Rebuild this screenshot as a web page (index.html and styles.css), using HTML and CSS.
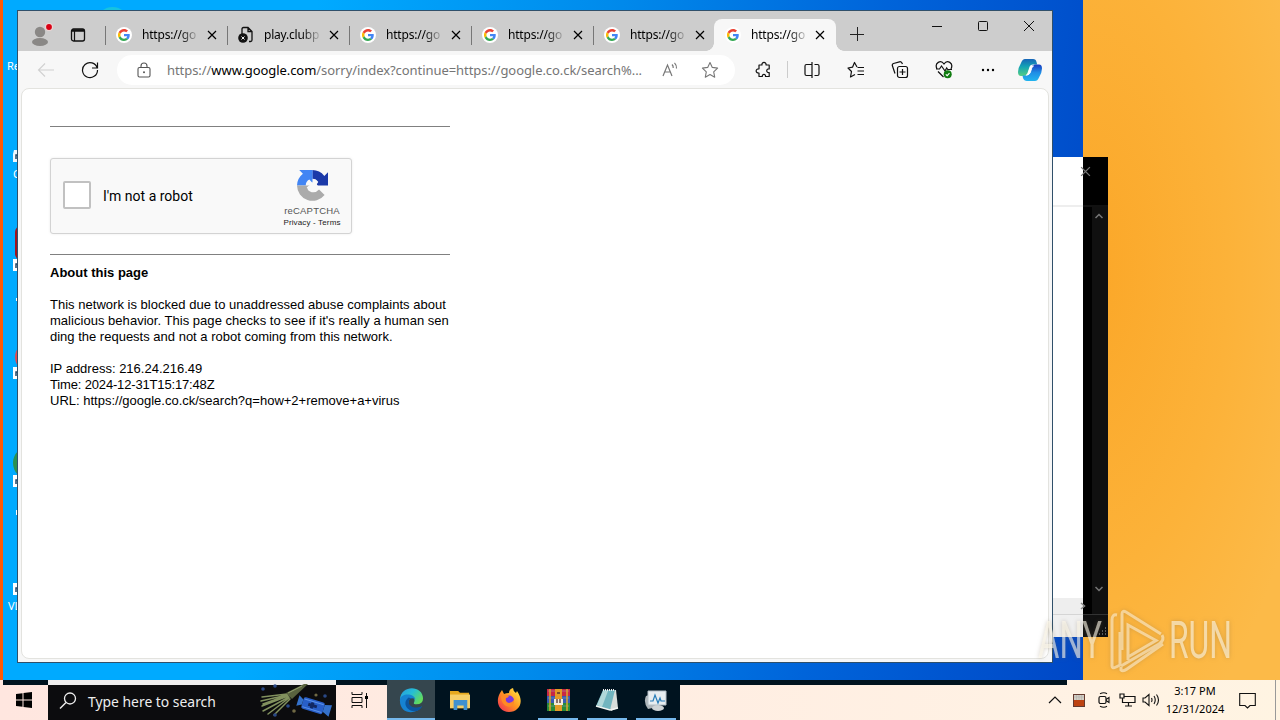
FILE: index.html
```html
<!DOCTYPE html>
<html lang="en">
<head>
    <meta charset="UTF-8">
    <meta name="viewport" content="width=device-width, initial-scale=1.0">
    <title>Desktop</title>
    <link rel="stylesheet" href="styles.css">
</head>
<body>
    <svg class="sprite" width="0" height="0">
        <symbol id="google" viewBox="0 0 48 48">
            <path fill="#ea4335" d="M24 9.500c3.500 0 6.700 1.200 9.200 3.600l6.900-6.900C35.900 2.400 30.500 0 24 0 14.600 0 6.500 5.400 2.600 13.200l8 6.200C12.400 13.700 17.700 9.500 24 9.500z"/>
            <path fill="#4285f4" d="M47 24.500c0-1.600-.2-3.100-.4-4.500H24v9h12.900c-.6 3-2.300 5.500-4.800 7.200l7.700 6C44.400 38 47 31.800 47 24.500z"/>
            <path fill="#fbbc05" d="M10.500 28.600a14.500 14.500 0 0 1 0-9.200l-8-6.200a24 24 0 0 0 0 21.600z"/>
            <path fill="#34a853" d="M24 48c6.500 0 11.900-2.100 15.900-5.800l-7.700-6c-2.200 1.500-4.900 2.300-8.200 2.300-6.300 0-11.600-4.200-13.500-9.900l-8 6.200C6.500 42.600 14.600 48 24 48z"/>
        </symbol>
        <symbol id="close" viewBox="0 0 10 10">
            <path d="M1 1l8 8M9 1L1 9" fill="none" stroke="currentColor" stroke-width="1.200"/>
        </symbol>
        <symbol id="shortcut" viewBox="0 0 12 12">
            <path fill="#fff" d="M0 0h12v12H0z"/>
            <path d="M3 9V5h5M6 3l2 2-2 2" fill="none" stroke="#246" stroke-width="1.500"/>
        </symbol>
    </svg>

    <div class="desktop">
        <div class="wallpaper"></div>

        <!-- desktop shortcuts, mostly hidden behind the browser -->
        <div class="shortcut s-recycle">Recycle Bin</div>
        <div class="shortcut s-one"><svg width="12" height="16" viewBox="0 0 12 16"><path d="M1 4h3V0h4v16H0V8z" fill="#eef6fb"/><path d="M3 13V9h5M6 7l2 2-2 2" fill="none" stroke="#246" stroke-width="1.500"/></svg></div>
        <div class="shortcut s-one-label">Opera</div>
        <div class="shortcut s-acrobat"></div>
        <div class="shortcut s-two"><svg width="12" height="12"><use href="#shortcut"/></svg></div>
        <div class="shortcut s-red"></div>
        <div class="shortcut s-three"><svg width="12" height="12"><use href="#shortcut"/></svg></div>
        <div class="shortcut s-green"></div>
        <div class="shortcut s-four"><svg width="12" height="12"><use href="#shortcut"/></svg></div>
        <div class="shortcut s-five"><svg width="12" height="12"><use href="#shortcut"/></svg></div>
        <div class="shortcut s-vlc">VLC media</div>
        <div class="shortcut s-top"></div>
        <div class="shortcut s-mark m-one"></div>
        <div class="shortcut s-mark m-two"></div>

        <!-- window behind, its right side has inverted colours -->
        <div class="back-window">
            <div class="back-light">
                <div class="back-head"></div>
                <div class="back-body"></div>
                <div class="back-scroll"></div>
                <div class="back-foot"></div>
            </div>
            <div class="back-dark">
                <div class="back-head"></div>
                <div class="back-track">
                    <svg width="8" height="6" viewBox="0 0 8 6"><path d="M.5 5L4 1.500 7.500 5" fill="none" stroke="#777" stroke-width="1.500"/></svg>
                    <svg width="8" height="6" viewBox="0 0 8 6"><path d="M.5 1L4 4.500 7.500 1" fill="none" stroke="#777" stroke-width="1.500"/></svg>
                </div>
                <div class="back-foot"><svg width="8" height="8"><path d="M1 7h1M4 7h1M7 7h1M4 4h1M7 4h1M7 1h1" stroke="#777" stroke-width="1.500"/></svg></div>
            </div>
            <svg class="back-close" width="11" height="11"><use href="#close"/></svg>
            <svg class="back-arrow" width="6" height="8" viewBox="0 0 6 8"><path d="M1 1l3.500 3L1 7" fill="none" stroke="#888" stroke-width="1.500"/></svg>
        </div>

        <div class="browser">
            <div class="titlebar">
                <div class="tab-actions">
                    <svg width="24" height="24" viewBox="0 0 24 24">
                        <circle cx="11" cy="9" r="5.200" fill="#8a8886"/><ellipse cx="11" cy="19" rx="8" ry="4" fill="#8a8886"/>
                        <circle cx="20" cy="4" r="4" fill="#ecd5d5"/><circle cx="20" cy="4" r="2.900" fill="#d90014"/>
                    </svg>
                    <svg width="16" height="16" viewBox="0 0 16 16"><rect x="1.500" y="2" width="13" height="12" rx="2" fill="none" stroke="#111" stroke-width="1.300"/><path d="M2 3.500h12" stroke="#111" stroke-width="2.500"/><path d="M4.500 4v10" stroke="#111" stroke-width="1.200"/></svg>
                </div>
                <div class="tab"><span class="favicon"><svg width="12" height="12"><use href="#google"/></svg></span><span class="tab-title">https://go</span><svg class="tab-close" width="10" height="10"><use href="#close"/></svg></div>
                <div class="tab"><span class="favicon plain"><svg width="16" height="18" viewBox="0 0 16 18"><path d="M4 8V3q0-1.500 1.500-1.500H10l4 4V14q0 1.500-1.500 1.500H11M10 1.500v4h4" fill="none" stroke="#111" stroke-width="1.300"/><circle cx="5" cy="12" r="4.800" fill="#111"/><path d="M3.500 10.500l3 3m0-3l-3 3" stroke="#eee" stroke-width="1"/></svg></span><span class="tab-title">play.clubp</span><svg class="tab-close" width="10" height="10"><use href="#close"/></svg></div>
                <div class="tab"><span class="favicon"><svg width="12" height="12"><use href="#google"/></svg></span><span class="tab-title">https://go</span><svg class="tab-close" width="10" height="10"><use href="#close"/></svg></div>
                <div class="tab"><span class="favicon"><svg width="12" height="12"><use href="#google"/></svg></span><span class="tab-title">https://go</span><svg class="tab-close" width="10" height="10"><use href="#close"/></svg></div>
                <div class="tab"><span class="favicon"><svg width="12" height="12"><use href="#google"/></svg></span><span class="tab-title">https://go</span><svg class="tab-close" width="10" height="10"><use href="#close"/></svg></div>
                <div class="tab active"><span class="favicon"><svg width="12" height="12"><use href="#google"/></svg></span><span class="tab-title">https://go</span><svg class="tab-close" width="10" height="10"><use href="#close"/></svg></div>
                <svg class="new-tab" width="14" height="14" viewBox="0 0 14 14"><path d="M7.500 0v14M0 7.500h14" stroke="#222"/></svg>
                <div class="window-controls">
                    <span><svg width="10" height="10"><path d="M0 5.500h10" stroke="#111"/></svg></span>
                    <span><svg width="10" height="10"><rect x=".5" y=".5" width="9" height="9" rx="1" fill="none" stroke="#111"/></svg></span>
                    <span><svg width="12" height="12" viewBox="0 0 12 12"><path d="M1 1l10 10M11 1L1 11" stroke="#111"/></svg></span>
                </div>
            </div>

            <div class="toolbar">
                <span class="tool"><svg width="18" height="16" viewBox="0 0 18 16"><path d="M17 8H1M8 1.500L1.500 8 8 14.500" fill="none" stroke="#d0d0d0" stroke-width="1.100"/></svg></span>
                <span class="tool"><svg width="18" height="18" viewBox="0 0 18 18"><path d="M16.200 7A7.500 7.500 0 1 0 16.500 9M16.500 1.500V7H11" fill="none" stroke="#111" stroke-width="1.200"/></svg></span>
                <div class="address">
                    <svg class="lock" width="14" height="16" viewBox="0 0 14 16"><rect x="1" y="5.500" width="12" height="9.500" rx="1.500" fill="none" stroke="#555" stroke-width="1.100"/><path d="M4 5.500V4a3 3 0 0 1 6 0v1.500" fill="none" stroke="#555" stroke-width="1.100"/><circle cx="7" cy="10.300" r="1" fill="#555"/></svg>
                    <span class="url">https://<b>www.google.com</b>/sorry/index?continue=https://google.co.ck/search%...</span>
                    <svg class="read" width="18" height="18" viewBox="0 0 18 18"><path d="M2 15L6.500 4 11 15M3.500 11h6M11 3.500q1.500 1.500 1.200 3.500M13.500 1.800q2.400 2.500 2 5.700" fill="none" stroke="#777" stroke-width="1.200"/></svg>
                    <svg width="18" height="18" viewBox="0 0 18 18"><path d="M9 1.500l2.300 4.900 5.300.7-3.900 3.700 1 5.400L9 13.600l-4.700 2.600 1-5.400L1.400 7.100l5.300-.7z" fill="none" stroke="#777" stroke-width="1.100" stroke-linejoin="round"/></svg>
                </div>
                <span class="tool"><svg width="17" height="18" viewBox="0 0 17 18"><path d="M4 4h3c-.7-3.500 4.700-3.500 4 0h3.200v4c-3.300-.6-3.300 4 0 3.600V15.500H10.500c.4-2.800-3.500-2.800-3.200 0H4V12C.2 12.300.2 7.500 4 7.800z" fill="none" stroke="#111" stroke-width="1.200" stroke-linejoin="round"/></svg></span>
                <span class="tool-divider"></span>
                <span class="tool"><svg width="16" height="16" viewBox="0 0 16 16"><path d="M5.500 2.500H2.500Q1 2.500 1 4v8q0 1.500 1.500 1.500H8V2.500H5.500M10.500 2.500h3Q15 2.500 15 4v8q0 1.500-1.500 1.500h-3M8 0v16" fill="none" stroke="#111" stroke-width="1.200"/></svg></span>
                <span class="tool"><svg width="18" height="18" viewBox="0 0 18 18"><path d="M10 6L7.500 1.500 5.500 6.200 1 7l3.500 3.500L3.500 16l4.500-2.500M10.500 6.500H17M10.500 10h6.500M10.500 13.500h6.500" fill="none" stroke="#111" stroke-width="1.200" stroke-linejoin="round"/></svg></span>
                <span class="tool"><svg width="18" height="18" viewBox="0 0 18 18"><rect x="6.500" y="5.500" width="10" height="11" rx="2" fill="none" stroke="#111" stroke-width="1.200"/><path d="M4 12.500L1.300 4.500Q1 3 2.500 2.500L8.500.8Q10.500.3 11.500 3M11.500 8v6M8.500 11h6" fill="none" stroke="#111" stroke-width="1.200"/></svg></span>
                <span class="tool"><svg width="18" height="18" viewBox="0 0 18 18"><path d="M2 8C-1 1.500 6-1.500 9 3c3-4.500 10-1.500 7 5M1 8h3.500L6.500 5 10 10l1.700-3 1 1.500H17M3 10.500l5.500 5.500" fill="none" stroke="#111" stroke-width="1.200"/><circle cx="12.700" cy="13.300" r="4" fill="#107c10"/><path d="M10.800 13.300l1.400 1.400 2.300-2.500" fill="none" stroke="#fff" stroke-width="1.100"/></svg></span>
                <span class="tool"><svg width="14" height="4"><circle cx="2" cy="2" r="1.200"/><circle cx="7" cy="2" r="1.200"/><circle cx="12" cy="2" r="1.200"/></svg></span>
                <span class="tool copilot"><svg width="24" height="22" viewBox="0 0 24 22">
                    <defs>
                        <linearGradient id="co1" x2="0" y2="1"><stop stop-color="#1765b8"/><stop offset=".45" stop-color="#13a3b5"/><stop offset="1" stop-color="#55cf83"/></linearGradient>
                        <linearGradient id="co2" x2="0" y2="1"><stop stop-color="#183cc0"/><stop offset=".5" stop-color="#208fe6"/><stop offset="1" stop-color="#22b4ee"/></linearGradient>
                    </defs>
                    <path d="M7 0h8q3 0 3.500 3l.7 2.500H15q-3 0-3.700 3l-2 6q-.8 2.500-3.300 2.500H3q-3 0-3-4 0-4 3-9 1.500-4 4-4z" fill="url(#co1)"/>
                    <path d="M17 22H9q-3 0-4-3l-.5-2.500H8q2.500 0 3.300-2.500l2-6q.7-2.500 3.700-2.500h4q3 0 3 4 0 4-3 9-1.500 3.500-4 3.500z" fill="url(#co2)"/>
                    <path d="M14.500 7q-2 0-2.700 2.500L10.500 14q-.5 1.500-2 2 2.700 0 3.700-2.200l1.500-4.600Q14 7.500 15.500 7z" fill="#fff" stroke="#fff"/>
                </svg></span>
            </div>

            <div class="page">
                <hr class="rule">
                <div class="captcha">
                    <span class="checkbox"></span>
                    <span class="captcha-label">I'm not a robot</span>
                    <div class="captcha-brand">
                        <svg width="31" height="31" viewBox="0 0 64 64">
                            <path fill="#1c3aa9" d="M64 32V4.600l-7.600 7.600A32 32 0 0 0 31.700 0v17.900q8.300 0 12.200 6.900L36 32z"/>
                            <path fill="#4285f4" d="M32 0H4.600l7.600 7.600A32 32 0 0 0 0 32h18q0-8.300 7.500-12.200L32 27z"/>
                            <path fill="#ababab" d="M0 32a32 32 0 0 0 57 19.500L45.500 40Q40 46 34 46q-8 0-12-6.500L29 32z"/>
                            <path fill="#f9f9f9" d="M24 21l7 6 6-8 6 6-2 5 4 5-8 7-5-6-8 6-4-6 6-5-4-5z"/>
                        </svg>
                        <span class="captcha-name">reCAPTCHA</span>
                        <span class="captcha-links">Privacy - Terms</span>
                    </div>
                </div>
                <hr class="rule">
                <div class="about">
                    <b>About this page</b>
                    <p><span class="line-1">This network is blocked due to unaddressed abuse complaints about</span><br><span class="line-2">malicious behavior. This page checks to see if it's really a human sen</span><br><span class="line-3">ding the requests and not a robot coming from this network.</span></p>
                    <p>IP address: 216.24.216.49<br><span class="time">Time: 2024-12-31T15:17:48Z</span><br>URL: https://google.co.ck/search?q=how+2+remove+a+virus</p>
                </div>
            </div>
        </div>

        <svg class="watermark" width="204" height="68" viewBox="0 0 204 68">
            <text x="2" y="50" textLength="64" lengthAdjust="spacingAndGlyphs">ANY</text>
            <text x="133" y="50" textLength="63" lengthAdjust="spacingAndGlyphs">RUN</text>
            <path d="M81 7q-5-1-5 5v46q0 3 4 1l4-2V24M86 42V6q0-4 4-2l35 22M92 52V17l28 15.500L92 49M126 27q3 5-3 9L85 58M127 36L91 61q-4 3-6 1v-3"/>
        </svg>
    </div>

    <div class="taskbar">
        <div class="start"><svg width="16" height="16" viewBox="0 0 16 16"><path d="M0 2l6.500-.8v6.300H0zM7.500 1L16 0v7.500H7.500zM0 8.500h6.500v6.300L0 14zM7.500 8.500H16V16l-8.500-1z"/></svg></div>
        <div class="search">
            <svg width="18" height="18" viewBox="0 0 18 18"><circle cx="11" cy="6.500" r="5.500" fill="none" stroke="#eee" stroke-width="1.300"/><path d="M7 10.500L1 16.500" stroke="#eee" stroke-width="1.400"/></svg>
            <span>Type here to search</span>
            <svg class="party" width="76" height="35" viewBox="0 0 76 35">
                <g fill="none" stroke="#82915e" stroke-width="1.500" stroke-linecap="round"><path d="M2 13l25-3M1 17l26-6M2 22l26-10M3 27l26-14M8 30l21-16M14 31l16-16M3 20l25-9"/></g>
                <path d="M26 9l18-9h4L32 15z" fill="#59633f"/><path d="M28 9l14-7" stroke="#93a170"/>
                <g transform="rotate(17 54 22)"><rect x="42" y="16" width="22" height="12" rx="2" fill="#285fc8"/><path d="M42 19l-5-3v11l5-3M64 18l7-2v12l-7-3" fill="#3471ca"/><path d="M43 18h20M43 26h20" stroke="#5b91e8"/><path d="M52 19v6M48 22h9" stroke="#122861" stroke-width="3"/></g>
                <g fill="#294886"><circle cx="3" cy="5" r="1.800"/><circle cx="15" cy="2" r="1.800"/><circle cx="65" cy="12" r="1.800"/><circle cx="15" cy="31" r="1.800"/><circle cx="28" cy="22" r="1.800"/></g>
                <g fill="#706944"><circle cx="56" cy="11" r="1.600"/><circle cx="34" cy="27" r="1.800"/></g>
            </svg>
        </div>
        <div class="task-view"><svg width="17" height="16" viewBox="0 0 17 16"><path d="M1 0v2.500h10V0M1 16v-2.500h10V16M1 5.500h10v5H1zM15.500 1v3M15.500 7v9" fill="none" stroke="#111"/><path d="M14 4h3v3h-3z"/></svg></div>
        <div class="apps">
            <div class="app focused running"><svg width="25" height="25" viewBox="0 0 26 26">
                <defs><linearGradient id="edge1" x2="1" y2=".6"><stop stop-color="#2899df"/><stop offset=".5" stop-color="#25bdd7"/><stop offset="1" stop-color="#63dc5b"/></linearGradient></defs>
                <path d="M1 12C2-4 25-3 25 11q0 6-7 6c-3 0-3-1-2-3 1-4-3-7-7-6-4 0-7 2-8 5z" fill="url(#edge1)"/>
                <path d="M1 12c1-7 15-7 16 0-4-3-8 0-7 4 1 5 8 7 14 3C17 29 0 27 1 12z" fill="#1683d3"/><path d="M10 10c-7 5-2 15 7 14 4 0 6-3 7-5-6 3-13 1-14-4q0-3 3-4z" fill="#0c559f"/>
            </svg></div>
            <div class="app"><svg width="24" height="20" viewBox="0 0 24 22"><path d="M1 1h9l2 2h10v17H1z" fill="#e5a91f"/><path d="M1 5h22v15H1z" fill="#f5cf68"/><path d="M5 22V11h15v11h-4v-5H9v5z" fill="#3f91cf"/></svg></div>
            <div class="app"><svg width="24" height="24" viewBox="0 0 24 24"><defs><linearGradient id="fox" x1="1" x2="0" y2="1"><stop stop-color="#fff04a"/><stop offset=".5" stop-color="#ff9421"/><stop offset="1" stop-color="#f0225b"/></linearGradient></defs><path d="M3 5l2-3 2 4q2-1 5-1 0-4 4-5 0 3 3 5l1-2c8 11 2 21-8 21S-2 14 3 5z" fill="url(#fox)"/><circle cx="12" cy="12.500" r="5" fill="#7a38df"/><path d="M4 8q3-3 8 0-1 2-3 2-1 4 3 5 3 0 5-3c1 10-13 9-13-4z" fill="#ff8a25"/></svg></div>
            <div class="app running short"><svg width="25" height="24" viewBox="0 0 25 24"><path d="M1 1h23v7H1z" fill="#c82746"/><path d="M1 8h23v7H1z" fill="#365bb5"/><path d="M1 15h23v8H1z" fill="#278a38"/><path d="M2 3h21M2 10h21M2 18h21" stroke="#9ba7bd" stroke-opacity=".5"/><path d="M4 1v22M21 1v22" stroke="#dca62d" stroke-width="1.500"/><path d="M9 1h7v22H9z" fill="#e49b27"/><path d="M8 11h9v6H8z" fill="#f3ebd8"/><path d="M11 11v4M14 11v4M11 5h3" stroke="#533" stroke-width="1.300"/></svg></div>
            <div class="app running short"><svg width="24" height="24" viewBox="0 0 24 24"><path d="M8 2h13l2 18-7 3z" fill="#d8dedb"/><path d="M8 2h12l-5 20L1 18z" fill="#72b5bf"/><path d="M8 3l5 0L7 19l-5-2z" fill="#b0d7d9"/><path d="M8 2h12" stroke="#eee" stroke-width="2" stroke-dasharray="1 1"/><path d="M1 18l14 4 8-2" stroke="#f2f5f2" stroke-width="1.500" fill="none"/></svg></div>
            <div class="app running short"><svg width="24" height="24" viewBox="0 0 24 24"><path d="M2 8l9-3 2 14-9 2q-5-7-2-13z" fill="#aeb5b9"/><path d="M4 3h18v14H4z" fill="#e7edf0" stroke="#b3bec5"/><path d="M6 13h3l2-6 3 8 2-5 1 3h4" fill="none" stroke="#287db8" stroke-width="1.200"/><ellipse cx="14" cy="20" rx="6" ry="3" fill="#cfd4d6"/></svg></div>
        </div>
        <div class="tray">
            <svg width="14" height="10" viewBox="0 0 14 10"><path d="M1 8l6-6 6 6" fill="none" stroke="#111" stroke-width="1.200"/></svg>
            <svg class="tray-app" width="12" height="13" viewBox="0 0 12 13"><path d="M0 0h12v13H0z" fill="#643a30"/><path d="M1 1h10v5H1z" fill="#d3cec3"/><path d="M1 6h10v6H1z" fill="#bd4312"/><path d="M1 3h10M3.500 1v5M6 1v5M8.500 1v5" stroke="#aaa" stroke-width=".5"/></svg>
            <svg class="meet" width="14" height="16" viewBox="0 0 14 16"><rect x="2" y="4.500" width="7" height="7" rx="1.500" fill="none" stroke="#111" stroke-width="1.200"/><path d="M9 7.500l3-2v5l-3-2M3 1.800q4-2 7 0M3 14.200q4 2 7 0" fill="none" stroke="#111" stroke-width="1.100"/></svg>
            <svg width="17" height="14" viewBox="0 0 17 14"><path d="M5 3.500h11v6H3.500V5M9.500 10v3M6 13h7M1 1h4v4H1z" fill="none" stroke="#111" stroke-width="1.200"/></svg>
            <svg class="volume" width="18" height="14" viewBox="0 0 18 14"><path d="M1 5h2l4-3.500v11L3 9H1zM9.500 5q1 2 0 4M12 3q2.500 4 0 8M14.500 1.500q4 5.500 0 11" fill="none" stroke="#111" stroke-width="1.100"/></svg>
            <div class="clock"><span>3:17 PM</span><span>12/31/2024</span></div>
            <svg width="17" height="17" viewBox="0 0 17 17"><path d="M.7 1.500h15.600v12H11L8.500 16 6 13.500H.7z" fill="none" stroke="#111" stroke-width="1.100"/></svg>
        </div>
    </div>
</body>
</html>
```
FILE: styles.css
```css
* {
    box-sizing: border-box;
}

body {
    margin: 0;
    width: 1280px;
    height: 720px;
    overflow: hidden;
    font-family: "Noto Sans", sans-serif;
    color: #000;
}

svg {
    display: block;
    flex: none;
}

.sprite {
    position: absolute;
}

/* Desktop */
.desktop {
    position: relative;
    height: 680px;
    overflow: hidden;
    background: radial-gradient(ellipse 230px 500px at 1090px 275px, #fba728, #fcb239 60%, #fcba48);
}

.wallpaper {
    width: 1083px;
    height: 680px;
    border-left: 3px solid #ff5a05;
    background: linear-gradient(97deg, #00aaff 0%, #00aaff 27%, #008bec 52%, #0064da 76%, #0047c6 100%);
}

.shortcut {
    position: absolute;
    left: 13px;
    color: #fff;
    font-size: 11px;
    line-height: 14px;
    white-space: nowrap;
}

.s-recycle { left: 7px; top: 59px; }
.s-one { top: 146px; }
.s-one-label { top: 167px; }
.s-acrobat { left: 15px; top: 226px; width: 36px; height: 34px; border-radius: 6px; background: #a1131d; }
.s-two { top: 259px; }
.s-red { left: 15px; top: 342px; width: 30px; height: 30px; border-radius: 50%; background: #e34a4e; }
.s-three { top: 367px; }
.s-green { top: 446px; width: 34px; height: 34px; border-radius: 50%; background: #2b9150; }
.s-four { top: 475px; }
.s-five { top: 583px; }
.s-vlc { left: 8px; top: 599px; }
.s-top { left: 97px; top: 7px; width: 31px; height: 30px; border-radius: 50%; background: #16c3e0; }
.s-mark { left: 16px; width: 1px; height: 5px; background: #fff; }
.m-one { top: 298px; height: 3px; }
.m-two { top: 510px; }

/* Window behind the browser */
.back-window {
    position: absolute;
    left: 1052px;
    top: 157px;
    width: 56px;
    height: 480px;
    display: flex;
}

.back-light, .back-dark {
    display: flex;
    flex-direction: column;
}

.back-light {
    width: 31px;
    background: #fff;
}

.back-dark {
    width: 25px;
    background: #000;
}

.back-head {
    height: 50px;
    border-bottom: 2px solid #eee;
}

.back-dark .back-head {
    border-color: #111;
}

.back-body {
    flex: 1;
}

.back-scroll {
    height: 16px;
    background: #eee;
}

.back-foot {
    height: 23px;
    background: #f0f0f0;
    border-top: 1px solid #d5d5d5;
}

.back-dark .back-foot {
    display: flex;
    align-items: flex-end;
    justify-content: flex-end;
    padding: 2px;
    background: #111;
    border-color: #333;
}

.back-track {
    flex: 1;
    margin-left: 9px;
    padding: 6px 5px 22px 3px;
    display: flex;
    flex-direction: column;
    justify-content: space-between;
    background: #101010;
}

.back-close {
    position: absolute;
    left: 28px;
    top: 9px;
    color: #777;
}

.back-arrow {
    position: absolute;
    left: 28px;
    top: 445px;
}

/* Browser */
.browser {
    position: absolute;
    left: 17px;
    top: 10px;
    width: 1036px;
    height: 653px;
    display: flex;
    flex-direction: column;
    border: 1px solid #30506a;
    background: #f7f7f7;
}

.titlebar {
    display: flex;
    height: 40px;
    background: #cdcdcd;
}

.tab-actions {
    width: 88px;
    display: flex;
    align-items: center;
    gap: 17px;
    padding: 8px 0 0 11px;
}

.tab {
    position: relative;
    width: 122px;
    height: 32px;
    margin-top: 8px;
    padding: 0 10px;
    display: flex;
    align-items: center;
}

.tab:not(.active)::before {
    content: "";
    position: absolute;
    left: -1px;
    top: 7px;
    width: 1px;
    height: 19px;
    background: #777;
}

.tab.active {
    width: 122px;
    margin-left: -2px;
    padding-left: 11px;
    background: #f7f7f7;
    border-radius: 8px 8px 0 0;
}

.tab.active::before,
.tab.active::after {
    content: "";
    position: absolute;
    bottom: 0;
    width: 8px;
    height: 8px;
}

.tab.active::before {
    left: -8px;
    background: radial-gradient(circle at 0 0, transparent 7.5px, #f7f7f7 8px);
}

.tab.active::after {
    right: -8px;
    background: radial-gradient(circle at 100% 0, transparent 7.5px, #f7f7f7 8px);
}

.favicon {
    width: 16px;
    height: 16px;
    flex: none;
    display: flex;
    align-items: center;
    justify-content: center;
    border-radius: 50%;
    background: #fff;
}

.favicon.plain {
    background: none;
}

.tab-title {
    width: 58px;
    margin-left: 10px;
    white-space: nowrap;
    font-size: 12px;
    letter-spacing: -0.2px;
    line-height: 18px;
    -webkit-mask-image: linear-gradient(90deg, #000 65%, transparent);
    mask-image: linear-gradient(90deg, #000 65%, transparent);
}

.tab-close {
    margin-left: 7px;
}

.tab.active .tab-close {
    margin-left: 6px;
}

.new-tab {
    margin: 16px 0 0 14px;
}

.window-controls {
    display: flex;
    height: 30px;
    margin-left: auto;
}

.window-controls span {
    width: 46px;
    display: flex;
    align-items: center;
    justify-content: center;
}

.toolbar {
    display: flex;
    align-items: center;
    height: 37px;
    padding-left: 6px;
    background: #f7f7f7;
}

.tool {
    width: 44px;
    flex: none;
    display: flex;
    justify-content: center;
}

.tool.copilot {
    width: 40px;
}

.tool-divider {
    width: 1px;
    height: 17px;
    margin: 0 2px 0 2px;
    background: #ccc;
}

.address {
    width: 618px;
    height: 30px;
    margin: 0 6px 0 5px;
    padding: 0 16px 0 20px;
    display: flex;
    align-items: center;
    border-radius: 15px;
    background: #fff;
}

.url {
    width: 480px;
    flex: none;
    margin-left: 16px;
    white-space: nowrap;
    font-size: 13px;
    letter-spacing: -0.06px;
    color: #757575;
}

.url b {
    font-weight: normal;
    color: #000;
}

.read {
    margin: 0 22px 0 14px;
}

/* Blocked page */
.page {
    flex: 1;
    margin: 0 3px 3px;
    padding: 37px 28px 0;
    border: 1px solid #e3e3df;
    border-radius: 8px;
    background: #fff;
    font-family: "Liberation Sans", Arial, sans-serif;
}

.rule {
    width: 400px;
    height: 1px;
    margin: 0;
    border: 0;
    background: #808080;
}

.captcha {
    width: 302px;
    height: 76px;
    margin: 31px 0 20px;
    padding-left: 12px;
    display: flex;
    align-items: center;
    border: 1px solid #d3d3d3;
    border-radius: 3px;
    background: #f9f9f9;
    box-shadow: 0 0 3px rgba(0, 0, 0, 0.08);
}

.checkbox {
    width: 28px;
    height: 28px;
    margin-top: -2px;
    border: 2px solid #c1c1c1;
    border-radius: 2px;
    background: #fff;
}

.captcha-label {
    margin: 0 0 0 12px;
    font-family: Roboto, sans-serif;
    font-size: 14px;
}

.captcha-brand {
    width: 78px;
    margin-left: auto;
    padding-top: 7px;
    display: flex;
    flex-direction: column;
    align-items: center;
    color: #555;
    line-height: 12px;
}

.captcha-name {
    margin-top: 4px;
    font-size: 9.5px;
    letter-spacing: 0.2px;
}

.captcha-links {
    color: #222;
    font-size: 8px;
    letter-spacing: 0.15px;
}

.about {
    padding-top: 10px;
    font-size: 13px;
    line-height: 16px;
    white-space: nowrap;
}

.about p {
    margin: 16px 0 0;
}

.line-1 {
    letter-spacing: 0.02px;
}

.line-2 {
    letter-spacing: 0.03px;
}

.time {
    letter-spacing: -0.16px;
}

.watermark {
    position: absolute;
    left: 1036px;
    top: 608px;
    fill: none;
    stroke: rgba(255, 246, 225, 0.55);
    stroke-width: 3;
    filter: drop-shadow(0 0 2px rgba(120, 100, 70, 0.5));
}

.watermark text {
    font-family: Roboto, sans-serif;
    font-size: 51px;
    font-weight: 400;
    fill: rgba(255, 250, 235, 0.6);
    stroke: none;
}

/* Taskbar */
.taskbar {
    height: 40px;
    display: flex;
    background:
        linear-gradient(#efeeee, #efeeee) 48px 0 / 288px 5px no-repeat,
        linear-gradient(#00131f, #00131f) 3px 0 / 1064px 5px no-repeat,
        linear-gradient(90deg, #ffe6df, #fff2e4 85%, #fff4e2);
}

.start {
    width: 48px;
    display: flex;
    align-items: center;
    justify-content: center;
}

.search {
    width: 288px;
    height: 35px;
    margin-top: 5px;
    padding: 0 0 3px 11px;
    display: flex;
    align-items: center;
    background: #0c0c0e;
    color: #eee;
    font-size: 13.9px;
}

.search span {
    margin-left: 11px;
    white-space: nowrap;
}

.search .party {
    margin-left: auto;
}

.task-view {
    width: 51px;
    padding-right: 4px;
    display: flex;
    align-items: center;
    justify-content: center;
}

.apps {
    width: 293px;
    display: flex;
    gap: 1px;
    background: #00131f;
}

.app {
    width: 48px;
    display: flex;
    align-items: center;
    justify-content: center;
}

.app.focused {
    background: #35464e;
}

.app.running {
    box-shadow: inset 0 -2px #76b9ed;
}

.app.running.short {
    box-shadow: none;
    background: linear-gradient(#76b9ed, #76b9ed) 50% 100% / 40px 2px no-repeat;
}

.tray {
    margin-left: auto;
    width: 232px;
    display: flex;
    align-items: center;
    gap: 10px;
    background: linear-gradient(90deg, transparent 227px, #999 227px, #999 228px, transparent 228px);
}

.tray-app {
    margin: 0 -1px 0 1px;
}

.meet {
    margin: 0 -2px 0 3px;
}

.volume {
    margin-left: -4px;
}

.clock {
    width: 60px;
    margin: 0 4px 0 -5px;
    display: flex;
    flex-direction: column;
    align-items: center;
    font-size: 11px;
    line-height: 18px;
    white-space: nowrap;
}
```
